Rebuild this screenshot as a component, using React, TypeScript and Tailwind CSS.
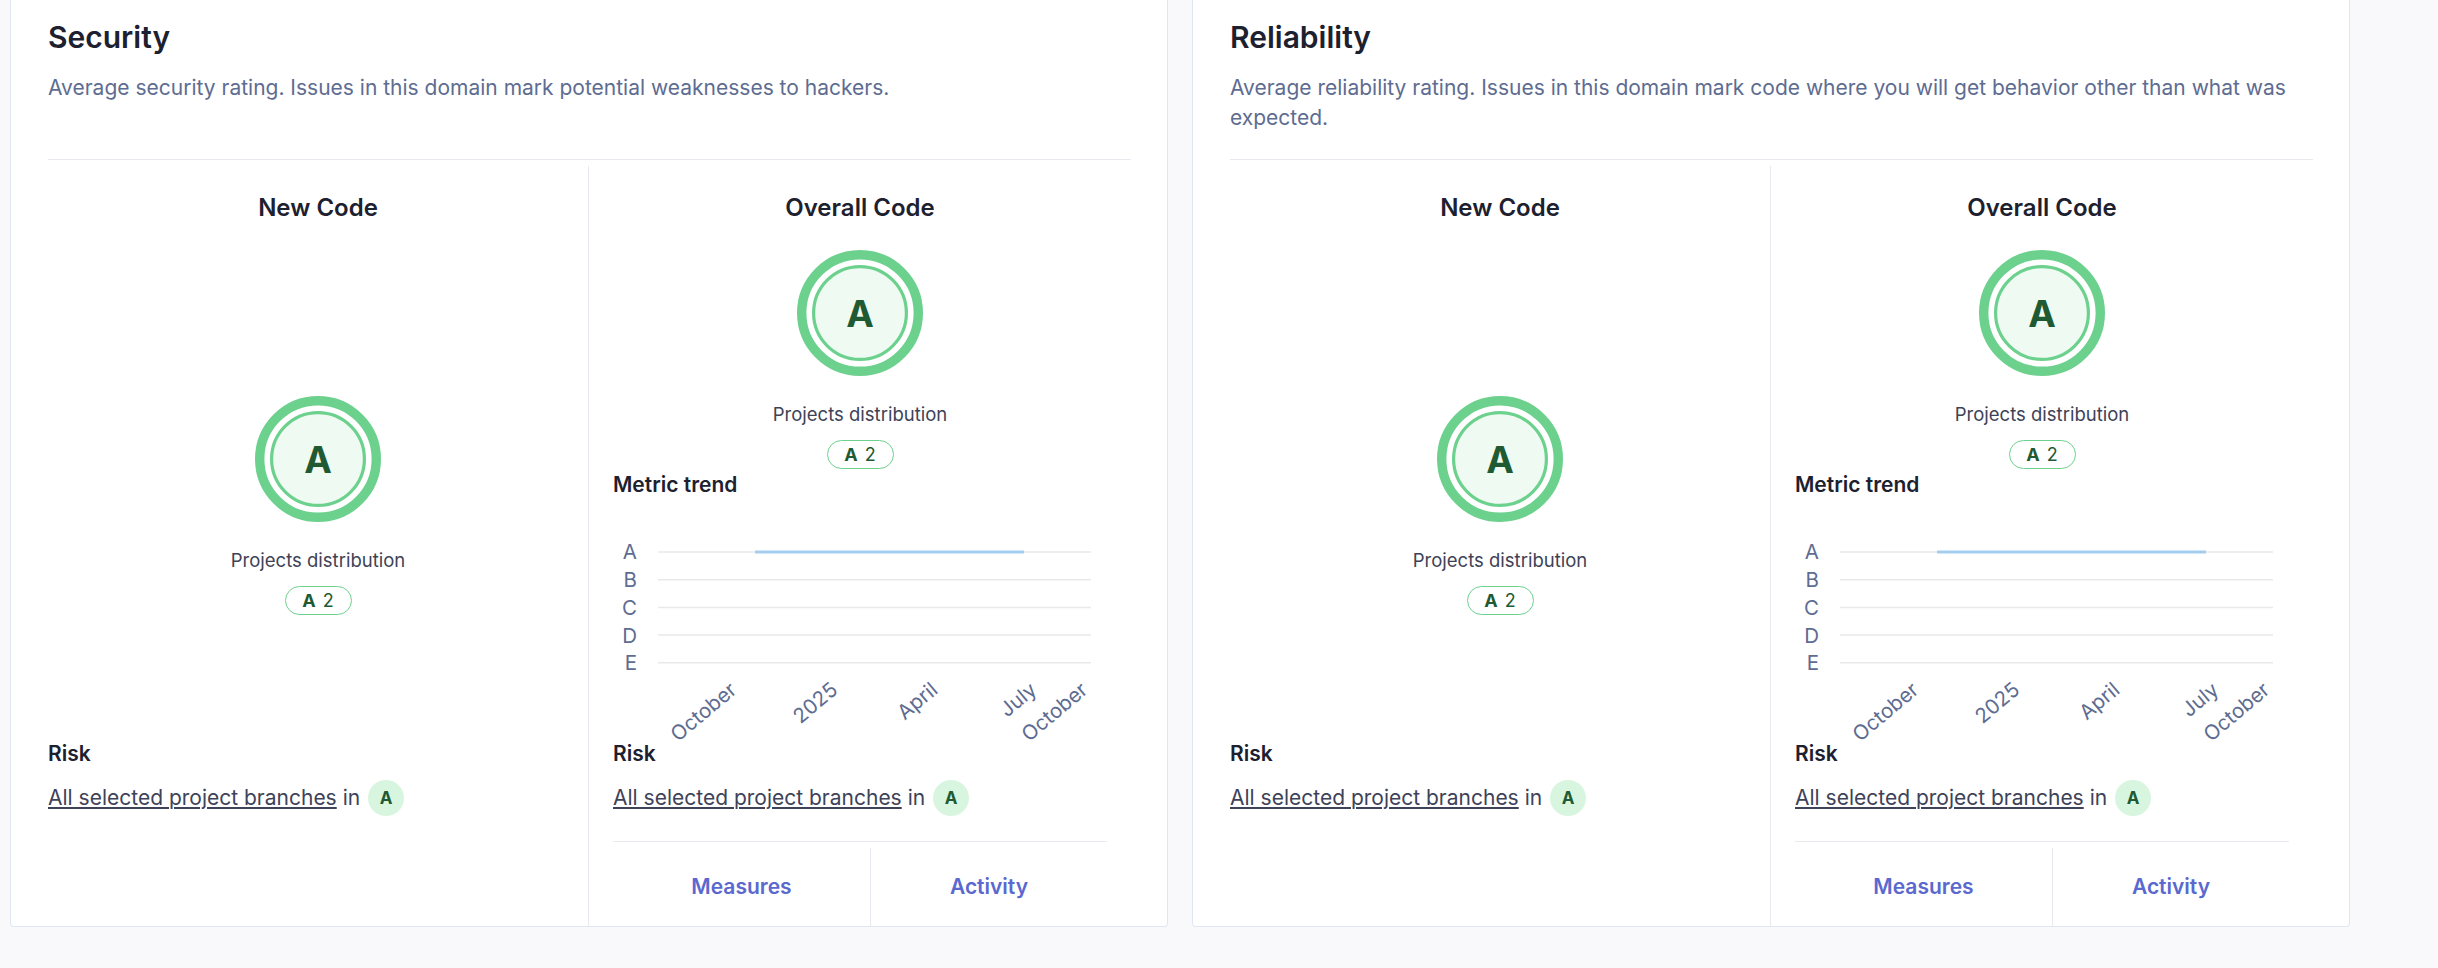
import React from "react";

type Domain = {
  title: string;
  description: string;
};

const domains: Domain[] = [
  {
    title: "Security",
    description:
      "Average security rating. Issues in this domain mark potential weaknesses to hackers.",
  },
  {
    title: "Reliability",
    description:
      "Average reliability rating. Issues in this domain mark code where you will get behavior other than what was expected.",
  },
];

const gridRows = ["A", "B", "C", "D", "E"];
const xTicks = [
  { label: "October", x: 125 },
  { label: "2025", x: 226 },
  { label: "April", x: 326 },
  { label: "July", x: 425 },
  { label: "October", x: 476 },
];

const RatingCircle: React.FC = () => (
  <svg width="126" height="126" viewBox="0 0 126 126" className="mx-auto block">
    <circle cx="63" cy="63" r="58.3" fill="none" stroke="#6dd18e" strokeWidth="9.4" />
    <circle cx="63" cy="63" r="46.4" fill="#effbf2" stroke="#6dd18e" strokeWidth="3.2" />
    <text
      x="63"
      y="76.5"
      textAnchor="middle"
      fontSize="37"
      fontWeight="700"
      fill="#1f5a33"
      fontFamily="Inter, sans-serif"
    >
      A
    </text>
  </svg>
);

const Distribution: React.FC = () => (
  <>
    <p className="mt-[27px] text-center text-[18.5px] leading-[22px] text-[#3e4257]">
      Projects distribution
    </p>
    <div className="mt-[15px] flex justify-center">
      <span className="inline-flex h-[29px] w-[67px] items-center justify-center gap-[7px] rounded-full border border-[#6dd18e] bg-white text-[18px] leading-none text-[#1f5a33]">
        <span className="font-bold">A</span>
        <span>2</span>
      </span>
    </div>
  </>
);

const TrendChart: React.FC = () => (
  <svg width="494" height="245" viewBox="0 0 494 245" overflow="visible" className="block overflow-visible">
    {gridRows.map((row, i) => {
      const y = 55 + i * 27.7;
      return (
        <g key={row}>
          <line x1="45" x2="478" y1={y} y2={y} stroke="#e9e9ec" strokeWidth="1.5" />
          <text
            x="24"
            y={y + 7.4}
            textAnchor="end"
            fontSize="20.5"
            fill="#5e6c91"
            fontFamily="Inter, sans-serif"
          >
            {row}
          </text>
        </g>
      );
    })}
    <line x1="142" x2="411" y1="55" y2="55" stroke="#a4cdef" strokeWidth="3" />
    {xTicks.map((tick, i) => (
      <text
        key={i}
        x={tick.x}
        y="195"
        textAnchor="end"
        fontSize="20.5"
        fill="#5e6c91"
        fontFamily="Inter, sans-serif"
        transform={`rotate(-40 ${tick.x} 195)`}
      >
        {tick.label}
      </text>
    ))}
  </svg>
);

const Risk: React.FC = () => (
  <div>
    <h4 className="text-[21px] font-semibold leading-[24px] text-[#1d212f]">Risk</h4>
    <div className="mt-[14px] flex h-[36px] items-center text-[21px] leading-[24px] text-[#3e4258]">
      <a href="#" className="underline decoration-[1.5px] underline-offset-[2px]">
        All selected project branches
      </a>
      <span className="ml-[6px]">in</span>
      <span className="ml-[8px] flex h-[36px] w-[36px] items-center justify-center rounded-full bg-[#d8f6df] text-[17px] font-bold text-[#1f5a33]">
        A
      </span>
    </div>
  </div>
);

const DomainCard: React.FC<{ domain: Domain }> = ({ domain }) => (
  <div className="w-[1158px] shrink-0 rounded-b-[4px] border-x border-b border-[#e1e6f3] bg-white pl-[37px] pr-[36px] pt-[19px]">
    <div className="h-[141px] border-b border-[#e8e9ee]">
      <h2 className="text-[30px] font-semibold leading-[36px] text-[#1d212f]">{domain.title}</h2>
      <p className="mt-[18px] text-[21px] leading-[30px] text-[#5e6c91]">{domain.description}</p>
    </div>

    <div className="mt-[6px] grid grid-cols-[540px_1fr]">
      {/* titles */}
      <h3 className="pt-[28px] text-center text-[24px] font-semibold leading-[28px] text-[#1d212f]">
        New Code
      </h3>
      <h3 className="border-l border-[#e8e9ee] px-6 pt-[28px] text-center text-[24px] font-semibold leading-[28px] text-[#1d212f]">
        Overall Code
      </h3>

      {/* ratings */}
      <div className="pt-[174px]">
        <RatingCircle />
        <Distribution />
      </div>
      <div className="border-l border-[#e8e9ee] px-6 pt-[28px]">
        <RatingCircle />
        <Distribution />
        <h4 className="mt-[4px] text-[21px] font-semibold leading-[24px] text-[#1d212f]">
          Metric trend
        </h4>
        <TrendChart />
      </div>

      {/* risk */}
      <Risk />
      <div className="border-l border-[#e8e9ee] px-6">
        <Risk />
      </div>

      {/* footer */}
      <div />
      <div className="border-l border-[#e8e9ee] px-6">
        <div className="mt-[25px] grid grid-cols-[257px_1fr] border-t border-[#e8e9ee] pt-[6px]">
          <a
            href="#"
            className="flex h-[78px] items-center justify-center text-[21px] font-semibold text-[#5a68cf]"
          >
            Measures
          </a>
          <a
            href="#"
            className="flex h-[78px] items-center justify-center border-l border-[#e8e9ee] text-[21px] font-semibold text-[#5a68cf]"
          >
            Activity
          </a>
        </div>
      </div>
    </div>
  </div>
);

export default function App() {
  return (
    <div className="min-h-screen bg-[#f9f9fb] pl-[10px] font-['Inter','Noto_Sans',sans-serif]">
      <div className="flex gap-[24px]">
        {domains.map((d) => (
          <DomainCard key={d.title} domain={d} />
        ))}
      </div>
    </div>
  );
}
